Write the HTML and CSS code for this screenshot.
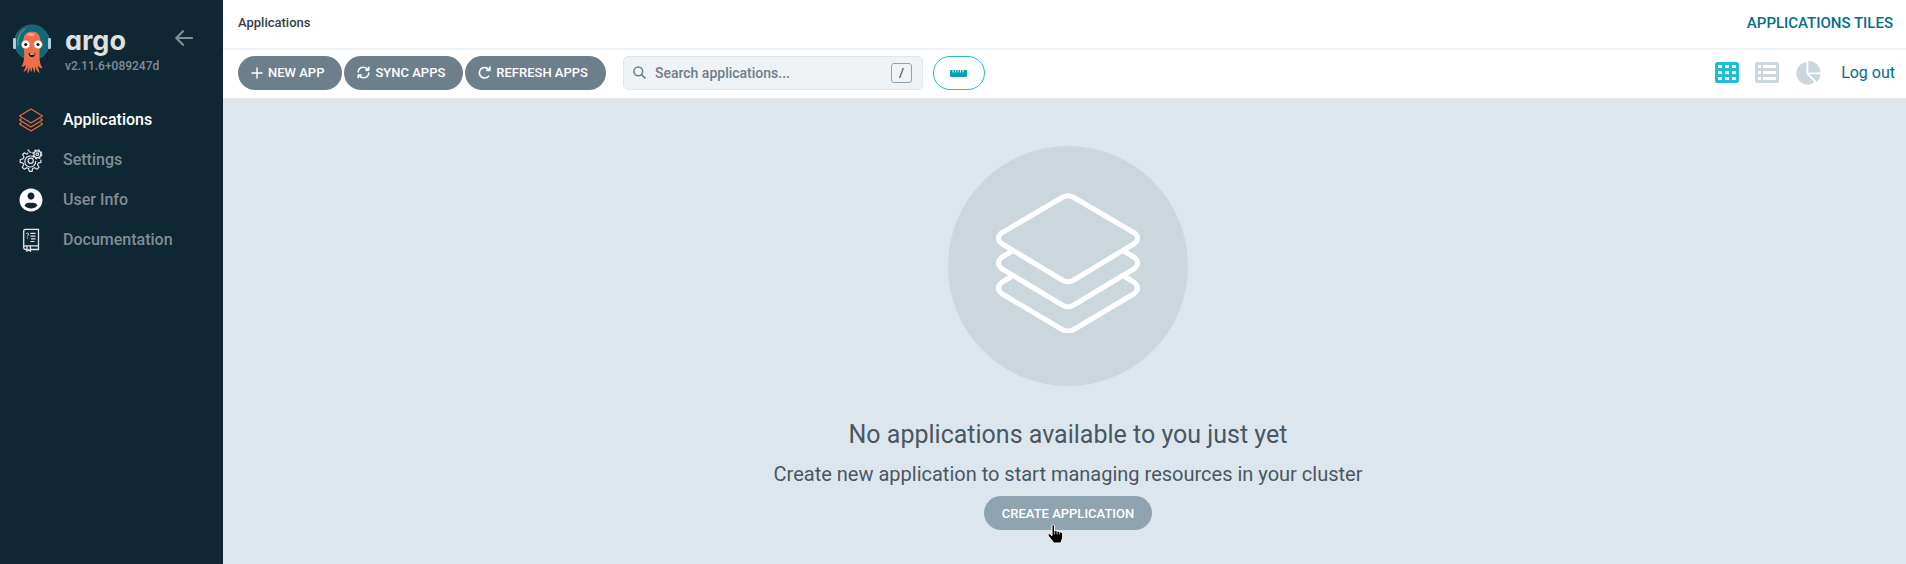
FILE: index.html
```html
<!DOCTYPE html>
<html lang="en">
<head>
<meta charset="utf-8">
<title>Applications Tiles - Argo CD</title>
<meta name="viewport" content="width=device-width, initial-scale=1">
<link rel="stylesheet" href="styles.css">
</head>
<body>
<div class="layout">
  <aside class="sidebar">
    <div class="brand">
      <svg class="brand-mascot" viewBox="0 0 38 50" width="38" height="50" aria-hidden="true">
        <circle cx="19" cy="18.500" r="17.500" fill="#0f6a73" stroke="#3a5f7d" stroke-width="1"/>
        <rect x="0" y="14" width="3" height="11" rx="1" fill="#b5cbe0"/>
        <rect x="35" y="14" width="3" height="11" rx="1" fill="#b5cbe0"/>
        <path d="M5 21C4 13 8 7 12 5" fill="none" stroke="#4d9aa0" stroke-width="1.300" stroke-linecap="round"/>
        <path d="M19 7.500c-5.500 0-8.800 4-8.600 9.500.2 6 1.100 10 .8 15-.2 4-.7 8-2.700 10.500 2 .6 3.500-.5 4.200-2-.2 2.500-.8 5-2.200 7 2 0 3.600-2 4.200-5l-.2 7c1.600-1 2.200-3.500 2.500-6.500l1 5.500 1.800-5.500 1.400 6c1-1.500 1-4 .8-6.500 1 3 2.400 5.500 4.600 6.500-.4-2.500-1.700-5-2-7.500 1.500 2.300 3.400 3 5 2.500-2.400-2.500-3-7-3.200-12-.2-5 .7-9 .9-15 .2-5.500-2.800-9.500-8.300-9.500z" fill="#ef6f4a"/>
        <ellipse cx="18" cy="10.500" rx="3.500" ry="1.500" fill="#f7a58c"/>
        <circle cx="12.700" cy="20.500" r="4.400" fill="#fff" stroke="#e04e36" stroke-width=".6"/>
        <circle cx="25" cy="20.500" r="4.400" fill="#fff" stroke="#e04e36" stroke-width=".6"/>
        <circle cx="12.700" cy="20.500" r="1.500" fill="#111"/>
        <circle cx="25" cy="20.500" r="1.500" fill="#111"/>
        <path d="M15.500 29c2 .7 5 .7 7 0-.2 2.600-1.500 4-3.500 4s-3.300-1.400-3.500-4z" fill="#151515"/>
        <path d="M17 29.600h4.500v1H17z" fill="#fff"/>
      </svg>
      <div class="brand-text">
        <span class="brand-name">argo</span>
        <a class="brand-version" href="#changelog">v2.11.6+089247d</a>
      </div>
      <button class="collapse" type="button" aria-label="Collapse sidebar">
        <svg viewBox="0 0 18 16" width="18" height="16"><path d="M17 8H1.500M8 1.200L1.300 8 8 14.800" fill="none" stroke="currentColor" stroke-width="2.200" stroke-linecap="round" stroke-linejoin="round"/></svg>
      </button>
    </div>
    <nav class="nav">
      <a class="nav-item nav-item-active" href="#applications">
        <svg class="nav-icon" viewBox="0 0 24 24" width="24" height="24" fill="none" stroke="#ee6b45" stroke-width="1.100" stroke-linejoin="round"><path d="M12 1L23.500 8 12 15 .5 8z"/><path d="M2.500 10.500L.5 12 12 19l11.500-7-2-1.500"/><path d="M2.500 14.500L.5 16 12 23l11.500-7-2-1.500"/></svg>
        <span>Applications</span>
      </a>
      <a class="nav-item" href="#settings">
        <svg class="nav-icon" viewBox="0 0 24 24" width="24" height="24" fill="none" stroke="#dfe5e8" stroke-width="1.200" stroke-linejoin="round"><path d="M12.500 4.500L10.500 4 9.500 2H8.300M9 4.500L8 6.200 5.200 4.800 3.600 6.500 5 9 4 10.800 1.200 11.500v2.800L4 15l.8 1.800L3.300 19.300l1.900 1.900 2.500-1.500 1.900.8.700 2.900H13l.7-2.900 1.900-.8 2.500 1.500 1.900-1.900-1.500-2.500.8-1.800 2.600-.7v-2.500"/><path d="M15 9.500a5.500 5.500 0 1 0 1.700 3.500"/><circle cx="11.700" cy="12.800" r="2.600"/><circle cx="18.300" cy="6.200" r="4.300" stroke-width="1.600" stroke-dasharray="2 1.370"/><circle cx="18.300" cy="6.200" r="3.400"/><circle cx="18.300" cy="6.200" r="1.300"/></svg>
        <span>Settings</span>
      </a>
      <a class="nav-item" href="#user-info">
        <svg class="nav-icon" viewBox="-6 -3 508 518" width="24" height="24" fill="#fff"><path d="M248 8C111 8 0 119 0 256s111 248 248 248 248-111 248-248S385 8 248 8zm0 88c44 0 76 34 76 76s-34 76-76 76-76-34-76-76 32-76 76-76zm0 344c-58.700 0-105-22-140-66 18.800-38 50-60 92-60h96c42 0 73 22 92 60-35 44-81 66-140 66z"/></svg>
        <span>User Info</span>
      </a>
      <a class="nav-item" href="#documentation">
        <svg class="nav-icon" viewBox="0 0 24 24" width="24" height="24" fill="none" stroke="#e3e8ea" stroke-width="1.300"><path d="M7.500 21.500H6.500A1.800 1.800 0 0 1 4.700 19.700V3A1.600 1.600 0 0 1 6.300 1.400H19.500V21.500H11.500M4.700 19.200a1.800 1.800 0 0 1 1.800-1.400H19.500M8 17.800V23l1.700-1.300L11.400 23v-5.200"/><path d="M11.500 5.300h5M11.500 8.100h5M12 10.900h4.500M11.500 13.500h4" stroke-width="1.200"/><path d="M7.300 6c.3-1.300 2.400-1.200 2.300.2 0 1-1.200 1-1.200 2.200M8.400 9.400v1.100" stroke-width="1"/></svg>
        <span>Documentation</span>
      </a>
    </nav>
  </aside>

  <main class="page">
    <header class="topbar">
      <a class="breadcrumb" href="#applications">Applications</a>
      <h1 class="page-title">Applications Tiles</h1>
    </header>

    <div class="toolbar">
      <div class="actions">
        <button class="btn btn-action" type="button">
          <svg viewBox="0 0 12 12" width="12" height="12"><path d="M6 1v10M1 6h10" stroke="currentColor" stroke-width="1.400" stroke-linecap="round"/></svg>
          New App
        </button>
        <button class="btn btn-action" type="button">
          <svg viewBox="0 0 512 512" width="13" height="13" fill="none" stroke="currentColor" stroke-width="64" stroke-linecap="round" stroke-linejoin="round"><path d="M48 230C56 120 150 48 256 48c80 0 140 40 186 100M464 48v112H350M464 282c-8 110-102 182-208 182-80 0-140-40-186-100M48 464V352h114"/></svg>
          Sync Apps
        </button>
        <button class="btn btn-action" type="button">
          <svg viewBox="0 0 512 512" width="13" height="13" fill="none" stroke="currentColor" stroke-width="64" stroke-linecap="round" stroke-linejoin="round"><path d="M416 400A206 206 0 1 1 432 156M470 40v130H340"/><path d="M470 60v110H360z" fill="currentColor" stroke-width="30"/></svg>
          Refresh Apps
        </button>
      </div>
      <label class="search">
        <svg viewBox="0 0 13 13" width="13" height="13"><circle cx="5.300" cy="5.300" r="4.400" fill="none" stroke="currentColor" stroke-width="1.500"/><path d="M8.600 8.600L12 12" stroke="currentColor" stroke-width="1.700" stroke-linecap="round"/></svg>
        <input class="search-input" type="text" placeholder="Search applications..." aria-label="Search applications">
        <kbd class="search-key">/</kbd>
      </label>
      <button class="btn btn-outline" type="button" aria-label="Toggle health status bar">
        <svg viewBox="0 0 17 8" width="17" height="8"><path d="M1 1h1.500v2.500h1V1h1.500v2.500h1V1h1.500v2.500h1V1H10v2.500h1V1h1.500v2.500h1V1H16a1 1 0 0 1 1 1v5a1 1 0 0 1-1 1H1a1 1 0 0 1-1-1V2a1 1 0 0 1 1-1z" fill="#00a2b3"/></svg>
      </button>
      <div class="views">
        <button class="view view-active" type="button" aria-label="Tiles">
          <svg viewBox="0 0 24 21" width="24" height="21"><path fill="currentColor" fill-rule="evenodd" d="M2.500 0h19A2.500 2.500 0 0 1 24 2.500v16a2.500 2.500 0 0 1-2.500 2.500h-19A2.500 2.500 0 0 1 0 18.500v-16A2.500 2.500 0 0 1 2.500 0zM3 3v3h4V3zm7 0v3h4V3zm7 0v3h4V3zM3 9v3h4V9zm7 0v3h4V9zm7 0v3h4V9zM3 15v3h4v-3zm7 0v3h4v-3zm7 0v3h4v-3z"/></svg>
        </button>
        <button class="view" type="button" aria-label="List">
          <svg viewBox="0 0 24 21" width="24" height="21"><path fill="currentColor" fill-rule="evenodd" d="M2.500 0h19A2.500 2.500 0 0 1 24 2.500v16a2.500 2.500 0 0 1-2.500 2.500h-19A2.500 2.500 0 0 1 0 18.500v-16A2.500 2.500 0 0 1 2.500 0zM3 3v3h3V3zm5 0v3h13V3zM3 9v3h3V9zm5 0v3h13V9zM3 15v3h3v-3zm5 0v3h13v-3z"/></svg>
        </button>
        <button class="view" type="button" aria-label="Summary">
          <svg viewBox="0 0 26 24" width="26" height="24" fill="currentColor"><path d="M11.500 1.200V13l8 8.300A11.300 11.300 0 1 1 10.800 1.200c.4-.1.700 0 .7 0z"/><path d="M13.300.7c0-.5.400-.7.800-.7C20 .2 25 5 25.400 10.600c0 .5-.3.800-.8.800H13.300z"/><path d="M14.500 13.300h10.300c.5 0 .8.400.7.900-.4 2.500-1.500 4.700-3.100 6.400-.3.400-.8.400-1.100 0z"/></svg>
        </button>
        <a class="logout" href="#logout">Log out</a>
      </div>
    </div>

    <section class="empty">
      <div class="empty-icon">
        <svg viewBox="0 0 144 140" width="144" height="140" fill="none" stroke="#fff" stroke-width="5" stroke-linejoin="round">
          <path d="M17 57.500L5.500 64.500Q-.5 70 5.500 75.500L67 112.500Q72 115 77 112.500L138.500 75.500Q144.500 70 138.500 64.500L127 57.500"/>
          <path d="M17 82.500L5.500 89.500Q-.5 95 5.500 100.500L67 137Q72 139 77 137L138.500 100.500Q144.500 95 138.500 89.500L127 82.500"/>
          <path d="M67 4Q72 1.500 77 4L138.500 40Q144.500 45 138.500 50.500L77 87.500Q72 90 67 87.500L5.500 50.500Q-.5 45 5.500 40z"/>
        </svg>
      </div>
      <h2 class="empty-title">No applications available to you just yet</h2>
      <p class="empty-text">Create new application to start managing resources in your cluster</p>
      <div class="empty-action">
        <button class="btn btn-create" type="button">Create application</button>
        <svg class="pointer" viewBox="0 0 17 20" width="17" height="20" aria-hidden="true"><path d="M5 1.800C5 .3 7.500.3 7.500 1.800V7c.5-.6 2.200-.4 2.500.5.600-.6 2-.3 2.400.7 1-.6 2.800-.2 3.100 1.300.4 2 .2 4.500-.6 6.500L14 19H6.500c-1-2.300-2.800-4-4.700-6.500C.2 10.400 1.700 9 3.300 10.200L5 11.700z" fill="#000" stroke="#fff" stroke-width="1"/><path d="M7.600 7.500v3M10.100 8v2.500M12.600 8.500v2" stroke="#fff" stroke-width=".7"/></svg>
      </div>
    </section>
  </main>
</div>
</body>
</html>
```
FILE: styles.css
```css
* {
  box-sizing: border-box;
}

body {
  margin: 0;
  font-family: Roboto, "Noto Sans", sans-serif;
  font-size: 16px;
  color: #363c4a;
}

a {
  color: inherit;
  text-decoration: none;
}

button {
  font: inherit;
  cursor: pointer;
}

svg {
  display: block;
  flex: none;
}

.layout {
  display: flex;
  min-height: 100vh;
}

/* Sidebar */

.sidebar {
  flex: none;
  width: 223px;
  background: #0f2733;
  color: #818d94;
}

.brand {
  display: flex;
  align-items: flex-start;
  height: 100px;
  padding: 24px 30px 0 13px;
}

.brand-text {
  display: flex;
  flex-direction: column;
  flex: 1;
  padding-left: 14px;
}

.brand-name {
  font-family: Inter, sans-serif;
  font-size: 27px;
  font-weight: 700;
  font-feature-settings: "cv11";
  line-height: 34px;
  color: #dee1df;
}

.brand-version {
  font-size: 12px;
  font-weight: 500;
  line-height: 16px;
}

.collapse {
  padding: 6px 0;
  border: 0;
  background: none;
  color: #818d94;
}

.nav-item {
  display: flex;
  align-items: center;
  gap: 20px;
  height: 40px;
  padding: 0 0 1px 19px;
  font-weight: 500;
}

.nav-item-active {
  color: #fff;
}

/* Page */

.page {
  display: flex;
  flex: 1;
  flex-direction: column;
  min-width: 0;
  background: #dee6ed;
}

.topbar,
.toolbar {
  display: flex;
  align-items: center;
  background: #fff;
}

.topbar {
  justify-content: space-between;
  height: 50px;
  padding: 0 13px 3px 15px;
  border-bottom: 2px solid #eff3f7;
}

.breadcrumb {
  font-size: 13px;
  font-weight: 500;
}

.page-title {
  margin: 0;
  font-size: 15px;
  font-weight: 500;
  text-transform: uppercase;
  color: #006f8a;
}

.toolbar {
  height: 49px;
  padding: 0 11px 3px 15px;
  border-bottom: 1px solid #e6edf2;
}

.actions {
  display: flex;
  gap: 2px;
}

.btn {
  display: flex;
  align-items: center;
  height: 34px;
  border: 0;
  border-radius: 17px;
  font-size: 13px;
  font-weight: 500;
  text-transform: uppercase;
  color: #fff;
}

.btn-action {
  gap: 5px;
  padding: 0 18px 0 13px;
  background: #6d7f8b;
}

.search {
  display: flex;
  align-items: center;
  width: 300px;
  height: 34px;
  margin: 0 10px 0 17px;
  padding: 0 10px 0 9px;
  border: 1px solid #dee6e9;
  border-radius: 5px;
  background: #eff3f6;
  color: #6d7f8b;
}

.search-input {
  flex: 1;
  min-width: 0;
  padding: 0 9px;
  border: 0;
  outline: 0;
  background: none;
  font: inherit;
  font-size: 14px;
  font-weight: 500;
  color: inherit;
}

.search-input::placeholder {
  color: #6d7f8b;
  opacity: 1;
}

.search-key {
  width: 21px;
  height: 20px;
  border: 1px solid #8fa4b1;
  border-radius: 3px;
  font-family: inherit;
  font-size: 13px;
  font-weight: 500;
  line-height: 18px;
  text-align: center;
  color: #495763;
}

.btn-outline {
  justify-content: center;
  width: 52px;
  border: 1px solid #18bed4;
  background: #fff;
}

.views {
  display: flex;
  align-items: center;
  gap: 16px;
  margin-left: auto;
}

.view {
  padding: 0;
  border: 0;
  background: none;
  color: #ccd6dd;
}

.view-active {
  color: #1fbdd0;
}

.logout {
  margin-left: 4px;
  color: #006f8a;
}

/* Empty state */

.empty {
  display: flex;
  flex-direction: column;
  align-items: center;
  padding: 47px 13px 33px 20px;
  color: #495763;
  text-align: center;
}

.empty-icon {
  display: grid;
  place-items: center;
  width: 240px;
  height: 240px;
  padding-bottom: 6px;
  border-radius: 50%;
  background: #ccd6dd;
}

.empty-title {
  margin: 33px 0 0;
  font-size: 25px;
  font-weight: 400;
  line-height: 32px;
}

.empty-text {
  margin: 7px 0 6px;
  font-size: 20px;
  line-height: 32px;
}

.empty-action {
  position: relative;
}

.btn-create {
  padding: 0 18px;
  background: #8fa4b1;
}

.pointer {
  position: absolute;
  top: 28px;
  left: 63px;
}
```
